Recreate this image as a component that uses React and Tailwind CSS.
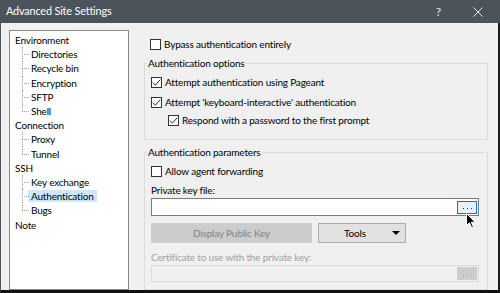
import React from "react";

const FONT = { fontFamily: 'Lato, "Noto Sans", sans-serif' };

const tree = [
  { label: "Environment", children: ["Directories", "Recycle bin", "Encryption", "SFTP", "Shell"] },
  { label: "Connection", children: ["Proxy", "Tunnel"] },
  { label: "SSH", children: ["Key exchange", "Authentication", "Bugs"] },
  { label: "Note", children: [] },
];

function Check({ checked }) {
  return (
    <span className="w-[11px] h-[11px] border border-[#333333] bg-white flex items-center justify-center shrink-0">
      {checked && (
        <svg width="9" height="9" viewBox="0 0 9 9">
          <path d="M0.8 4.6 L3.4 7.2 L8.3 1.6" stroke="#2a2a2a" strokeWidth="1" fill="none" />
        </svg>
      )}
    </span>
  );
}

function CheckRow({ checked, label, indent }) {
  return (
    <div className={`flex items-center h-[14px] ${indent ? "pl-[23px]" : "pl-[6px]"}`}>
      <Check checked={checked} />
      <span className="ml-[3px] text-black whitespace-nowrap">{label}</span>
    </div>
  );
}

function Tree() {
  return (
    <div className="w-[120px] ml-[8px] mt-[7px] bg-white border border-[#828790] pt-[2px]">
      {tree.map((p) => (
        <div key={p.label}>
          <div className="h-[14.2px] flex items-center pl-[5px] text-black">{p.label}</div>
          {p.children.map((c, i) => {
            const last = i === p.children.length - 1;
            const sel = c === "Authentication";
            return (
              <div key={c} className="h-[14.2px] flex items-stretch">
                <div className="w-[12px] shrink-0" />
                <div className="relative w-[6px] shrink-0">
                  <div
                    className={`absolute left-0 top-0 border-l border-dotted border-[#a0a0a0] ${last ? "h-1/2" : "h-full"}`}
                  />
                  <div className="absolute left-0 top-1/2 w-[7px] border-t border-dotted border-[#a0a0a0]" />
                </div>
                <div className="flex items-center">
                  <span className={`px-[3px] h-[12px] flex items-center ${sel ? "bg-[#cce8ff]" : ""}`}>{c}</span>
                </div>
              </div>
            );
          })}
        </div>
      ))}
    </div>
  );
}

function Group({ title, className, children }) {
  return (
    <div className={`relative border border-[#dcdcdc] ${className}`}>
      <span className="absolute left-[2px] top-[-8px] h-[14px] px-px bg-[#f0f0f0] flex items-center text-black whitespace-nowrap">
        {title}
      </span>
      {children}
    </div>
  );
}

function Dots({ color }) {
  return (
    <svg width="9" height="2" viewBox="0 0 9 2">
      <rect x="0" y="0" width="1" height="1" fill={color} />
      <rect x="4" y="0" width="1" height="1" fill={color} />
      <rect x="8" y="0" width="1" height="1" fill={color} />
    </svg>
  );
}

export default function App() {
  return (
    <div
      className="w-[500px] h-[293px] overflow-hidden relative text-[10px] tracking-[-0.18px] leading-none"
      style={FONT}
    >
      <div className="h-[23px] bg-[#4b545a] flex items-center text-white">
        <span className="ml-[6px] text-[10.9px]">Advanced Site Settings</span>
        <span className="ml-auto mr-[32px] text-[12px] text-[#e8e8e8]">?</span>
        <svg className="mr-[17px]" width="10" height="10" viewBox="0 0 10 10">
          <path d="M0.5 0.5 L9.5 9.5 M9.5 0.5 L0.5 9.5" stroke="#e8e8e8" strokeWidth="1" />
        </svg>
      </div>
      <div className="h-[270px] flex bg-[#f0f0f0] border-l border-l-[#4b545a] border-r-2 border-r-[#1a1a1a] border-b-[3px] border-b-[#111111]">
        <Tree />
        <div className="ml-[15px] w-[344px] flex flex-col pt-[14px]">
          <CheckRow label="Bypass authentication entirely" />
          <Group title="Authentication options" className="mt-[12px] h-[77px] pt-[11px]">
            <CheckRow checked label="Attempt authentication using Pageant" />
            <div className="mt-[6px]">
              <CheckRow checked label="Attempt 'keyboard-interactive' authentication" />
            </div>
            <div className="mt-[4px]">
              <CheckRow checked indent label="Respond with a password to the first prompt" />
            </div>
          </Group>
          <Group title="Authentication parameters" className="mt-[12px] flex-1 pt-[11px]">
            <CheckRow label="Allow agent forwarding" />
            <div className="mt-[5px] h-[14px] pl-[6px] flex items-center">Private key file:</div>
            <div className="mt-[1px] ml-[6px] w-[328px] h-[18px] bg-white border border-[#7a7a7a] flex items-center justify-end pr-px">
              <div className="w-[20px] h-[13px] bg-[#e5f1fb] border border-[#0078d7] flex items-end justify-center pb-[3px]">
                <Dots color="#333333" />
              </div>
            </div>
            <div className="mt-[7px] ml-[6px] flex">
              <div className="w-[161px] h-[20px] bg-[#cccccc] flex items-center justify-center text-[#838383]">
                Display Public Key
              </div>
              <div className="ml-[6px] w-[88px] h-[20px] bg-[#e1e1e1] border border-[#adadad] flex items-center relative pr-[14px]">
                <span className="w-full text-center text-black">Tools</span>
                <svg className="absolute right-[5px] top-[7px]" width="8" height="4" viewBox="0 0 8 4">
                  <path d="M0 0 H8 L4 4 Z" fill="#000" />
                </svg>
              </div>
            </div>
            <div className="mt-[7px] h-[14px] pl-[6px] flex items-center text-[#a0a0a0]">
              Certificate to use with the private key:
            </div>
            <div className="mt-[1px] ml-[6px] w-[328px] h-[17px] bg-[#f0f0f0] border border-[#d9d9d9] flex items-center justify-end pr-px">
              <div className="w-[20px] h-[13px] bg-[#cccccc] flex items-end justify-center pb-[3px]">
                <Dots color="#a0a0a0" />
              </div>
            </div>
          </Group>
        </div>
      </div>
      <svg className="absolute left-[466px] top-[213px]" width="10" height="16" viewBox="0 0 10 16">
        <path
          d="M0.5 0.5 L0.5 12.5 L3.5 9.8 L5.6 14.6 L7.4 13.8 L5.4 9.2 L9.2 9.2 Z"
          fill="#000"
          stroke="#fff"
          strokeWidth="1"
        />
      </svg>
    </div>
  );
}
